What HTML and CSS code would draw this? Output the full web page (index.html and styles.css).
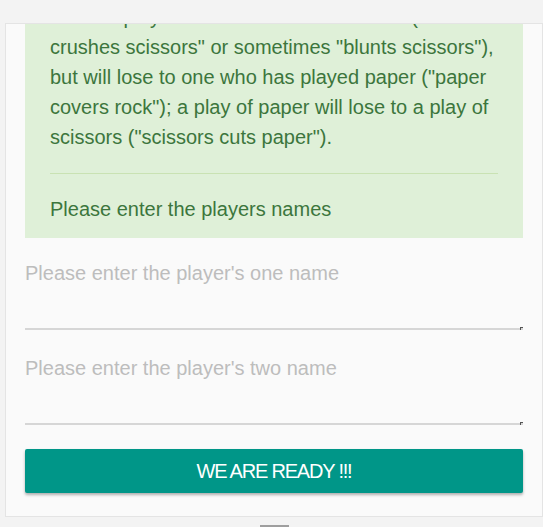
FILE: index.html
```html
<!DOCTYPE html>
<html lang="en">
<head>
<meta charset="utf-8">
<title>Rock Paper Scissors</title>
<link rel="stylesheet" href="styles.css">
</head>
<body>
<main class="card">
  <div class="card-body">
    <section class="alert">
      <p class="rules">A player who decides to play rock will beat another player who has chosen scissors ("rock crushes scissors" or sometimes "blunts scissors"), but will lose to one who has played paper ("paper covers rock"); a play of paper will lose to a play of scissors ("scissors cuts paper").</p>
      <hr class="divider">
      <p class="prompt">Please enter the players names</p>
    </section>
    <form class="players">
      <div class="fields">
        <div class="field-wrap">
          <textarea class="field" placeholder="Please enter the player's one name"></textarea>
        </div>
        <div class="field-wrap">
          <textarea class="field" placeholder="Please enter the player's two name"></textarea>
        </div>
      </div>
      <button type="button" class="ready">WE ARE READY !!!</button>
    </form>
  </div>
</main>
<div class="pager"><span class="pager-bar"></span></div>
</body>
</html>
```

FILE: styles.css
```css
html, body {
  margin: 0;
  padding: 0;
}

body {
  background: #f3f3f3;
  font-family: "Liberation Sans", Arial, sans-serif;
  padding-top: 23px;
  height: 527px;
  box-sizing: border-box;
  overflow: hidden;
}

.card {
  display: block;
  margin-left: 5px;
  background: #fafafa;
  border: 1px solid #e4e4e4;
  height: 494px;
  box-sizing: border-box;
  overflow: hidden;
}

.card-body {
  padding: 0 19px 23px 19px;
}

/* the card is scrolled: the top of the rules box lies above its edge */
.alert {
  margin-top: -67px;
  background: #dff0d8;
  color: #3c763d;
  padding: 15px 25px 14px 25px;
  font-size: 20px;
  line-height: 30px;
}

.alert p {
  margin: 0;
}

.divider {
  border: 0;
  border-top: 1px solid #c9e2b3;
  margin: 21px 0 20px 0;
  height: 0;
}

.players {
  display: flex;
  flex-direction: column;
}

.fields {
  display: flex;
  flex-direction: column;
  gap: 23px;
  margin-top: 20px;
}

.field-wrap {
  position: relative;
}

/* small resize grip at the end of the underline */
.field-wrap::after {
  content: "";
  position: absolute;
  right: 0;
  bottom: 0;
  width: 2px;
  height: 2px;
  border-top: 1px solid #555;
  border-left: 1px solid #555;
}

.field {
  display: block;
  width: 100%;
  box-sizing: border-box;
  height: 72px;
  margin: 0;
  padding: 1px 0 0 0;
  border: 0;
  border-bottom: 2px solid #d6d6d6;
  background: transparent;
  font-family: "Liberation Sans", Arial, sans-serif;
  font-size: 20px;
  line-height: 28px;
  color: #333;
  outline: none;
  resize: none;
}

.field::placeholder {
  color: #bdbdbd;
}

.ready {
  margin-top: 24px;
  height: 44px;
  border: 0;
  border-radius: 2px;
  background: #009688;
  color: #ffffff;
  font-family: "Liberation Sans", Arial, sans-serif;
  font-size: 20px;
  letter-spacing: -1.2px;
  box-shadow: 0 2px 3px rgba(0, 0, 0, 0.3);
  cursor: pointer;
}

.pager {
  display: flex;
  justify-content: center;
  padding: 8px 0 0 6px;
}

.pager-bar {
  display: block;
  width: 29px;
  height: 4px;
  background: #9e9e9e;
}
```
